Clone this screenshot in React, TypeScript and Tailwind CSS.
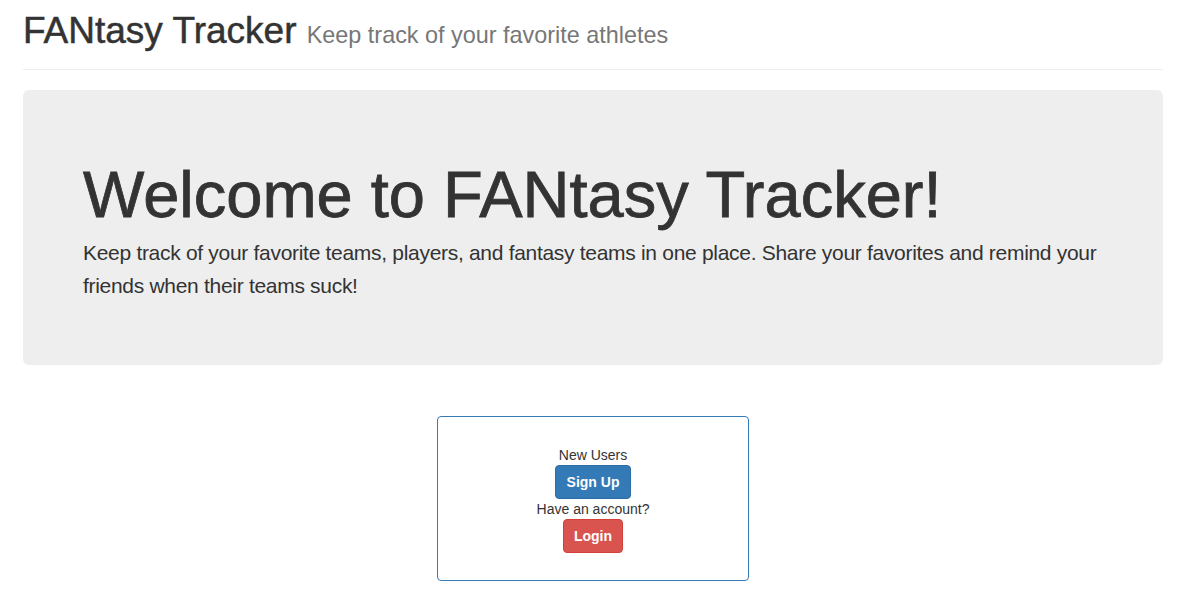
import * as React from "react";

const PageHeader: React.FunctionComponent = () => {
  return (
    <div className="pt-[11px] pb-[14px] border-b border-[#eeeeee]">
      <h1 className="text-[37px] leading-[40px] text-[#333333] font-normal [-webkit-text-stroke:0.5px_#333333]">
        FANtasy Tracker{" "}
        <small className="text-[23.4px] text-[#777777] font-normal [-webkit-text-stroke:0px]">
          Keep track of your favorite athletes
        </small>
      </h1>
    </div>
  );
};

const Jumbotron: React.FunctionComponent = () => {
  return (
    <div className="mt-[20px] bg-[#eeeeee] rounded-[6px] px-[60px] pt-[48px] pb-[48px]">
      <h1 className="mt-[22px] mb-[6px] text-[65px] leading-[70px] text-[#333333] font-normal [-webkit-text-stroke:0.8px_#333333]">
        Welcome to FANtasy Tracker!
      </h1>
      <p className="mb-[15px] text-[21px] leading-[33px] tracking-[-0.3px] text-[#333333]">
        Keep track of your favorite teams, players, and fantasy teams in one
        place. Share your favorites and remind your friends when their teams
        suck!
      </p>
    </div>
  );
};

const AuthBox: React.FunctionComponent = () => {
  return (
    <div className="mt-[51px] flex justify-center">
      <div className="w-[312px] h-[165px] border border-[#337ab7] rounded-[4px] pt-[28px] flex flex-col items-center text-[14px] leading-[20px] text-[#333333]">
        <span>New Users</span>
        <button className="h-[34px] px-[11px] bg-[#337ab7] border border-[#2e6da4] rounded-[4px] text-white font-bold">
          Sign Up
        </button>
        <span>Have an account?</span>
        <button className="h-[34px] px-[10px] bg-[#d9534f] border border-[#d43f3a] rounded-[4px] text-white font-bold">
          Login
        </button>
      </div>
    </div>
  );
};

export default function App() {
  return (
    <div
      className="min-h-screen bg-white pl-[23px] pr-[29px]"
      style={{ fontFamily: '"Liberation Sans", Arial, sans-serif' }}
    >
      <PageHeader />
      <Jumbotron />
      <AuthBox />
    </div>
  );
}
